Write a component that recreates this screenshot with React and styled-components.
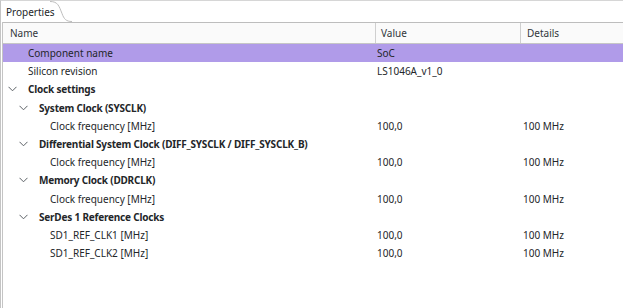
import styled, { createGlobalStyle } from 'styled-components';

const GlobalStyle = createGlobalStyle`
  html, body {
    margin: 0;
    padding: 0;
    background: #ffffff;
  }
  body {
    font-family: "Noto Sans", "DejaVu Sans", sans-serif;
    font-size: 10px;
    color: #232629;
  }
`;

const Frame = styled.div`
  width: 623px;
  height: 308px;
  box-sizing: border-box;
  border-top: 1px solid #d6d6d6;
  border-left: 1px solid #c4c4c4;
  display: flex;
  flex-direction: column;
  overflow: hidden;
  background: #ffffff;
`;

const TabBar = styled.div`
  display: flex;
  align-items: stretch;
  height: 21px;
`;

const Tab = styled.div`
  display: flex;
  align-items: center;
  padding: 1px 0 0 5px;
  width: 44px;
  color: #232629;
`;

const Panel = styled.div`
  flex: 1;
  display: flex;
  flex-direction: column;
  border-left: 1px solid #c4c4c4;
  margin-left: 1px;
`;

const cols = '372px 145px 1fr';

const Header = styled.div`
  display: grid;
  grid-template-columns: ${cols};
  height: 20px;
  border-top: 1px solid #bdbdbd;
  border-bottom: 1px solid #c6c6c6;
  background: #fafafa;
  color: #31363b;
`;

const HeaderCell = styled.div`
  display: flex;
  align-items: center;
  padding-left: ${(p) => p.pad || 6}px;
  border-left: ${(p) => (p.first ? 'none' : '1px solid #cfcfcf')};
`;

const Row = styled.div`
  display: grid;
  grid-template-columns: ${cols};
  height: 18.2px;
  align-items: center;
  background: ${(p) => (p.selected ? '#b09be9' : 'transparent')};
  white-space: nowrap;
`;

const NameCell = styled.div`
  display: flex;
  align-items: center;
  padding-left: ${(p) => 3 + p.level * 11}px;
  font-weight: ${(p) => (p.group ? 700 : 400)};
  letter-spacing: ${(p) => (p.group ? '-0.2px' : '0')};
`;

const Toggle = styled.span`
  display: inline-flex;
  width: 22px;
  justify-content: flex-start;
  padding-left: 2px;
  box-sizing: border-box;
`;

const ValueCell = styled.div`
  padding-left: ${(p) => p.pad}px;
`;

function Chevron() {
  return (
    <svg width="9" height="6" viewBox="0 0 9 6">
      <path d="M0.5 0.8 L4.5 4.8 L8.5 0.8" fill="none" stroke="#5c6166" strokeWidth="1" />
    </svg>
  );
}

const rows = [
  { name: 'Component name', value: 'SoC', level: 0, selected: true },
  { name: 'Silicon revision', value: 'LS1046A_v1_0', level: 0 },
  { name: 'Clock settings', level: 0, group: true },
  { name: 'System Clock (SYSCLK)', level: 1, group: true },
  { name: 'Clock frequency [MHz]', value: '100,0', details: '100 MHz', level: 2 },
  { name: 'Differential System Clock (DIFF_SYSCLK / DIFF_SYSCLK_B)', level: 1, group: true },
  { name: 'Clock frequency [MHz]', value: '100,0', details: '100 MHz', level: 2 },
  { name: 'Memory Clock (DDRCLK)', level: 1, group: true },
  { name: 'Clock frequency [MHz]', value: '100,0', details: '100 MHz', level: 2 },
  { name: 'SerDes 1 Reference Clocks', level: 1, group: true },
  { name: 'SD1_REF_CLK1 [MHz]', value: '100,0', details: '100 MHz', level: 2 },
  { name: 'SD1_REF_CLK2 [MHz]', value: '100,0', details: '100 MHz', level: 2 },
];

export default function App() {
  return (
    <>
      <GlobalStyle />
      <Frame>
        <TabBar>
          <Tab>Properties</Tab>
          <svg width="22" height="21" viewBox="0 0 22 21">
            <path d="M0 0.5 C8 0.5 9 5 12 12.5 C14 18 16 20.5 22 20.5" fill="none" stroke="#bdbdbd" strokeWidth="1" />
          </svg>
        </TabBar>
        <Panel>
          <Header>
            <HeaderCell first pad={7}>Name</HeaderCell>
            <HeaderCell pad={5}>Value</HeaderCell>
            <HeaderCell pad={6}>Details</HeaderCell>
          </Header>
          {rows.map((r, i) => (
            <Row key={i} selected={r.selected}>
              <NameCell level={r.level} group={r.group}>
                <Toggle>{r.group ? <Chevron /> : null}</Toggle>
                {r.name}
              </NameCell>
              <ValueCell pad={2}>{r.value}</ValueCell>
              <ValueCell pad={3}>{r.details}</ValueCell>
            </Row>
          ))}
        </Panel>
      </Frame>
    </>
  );
}
